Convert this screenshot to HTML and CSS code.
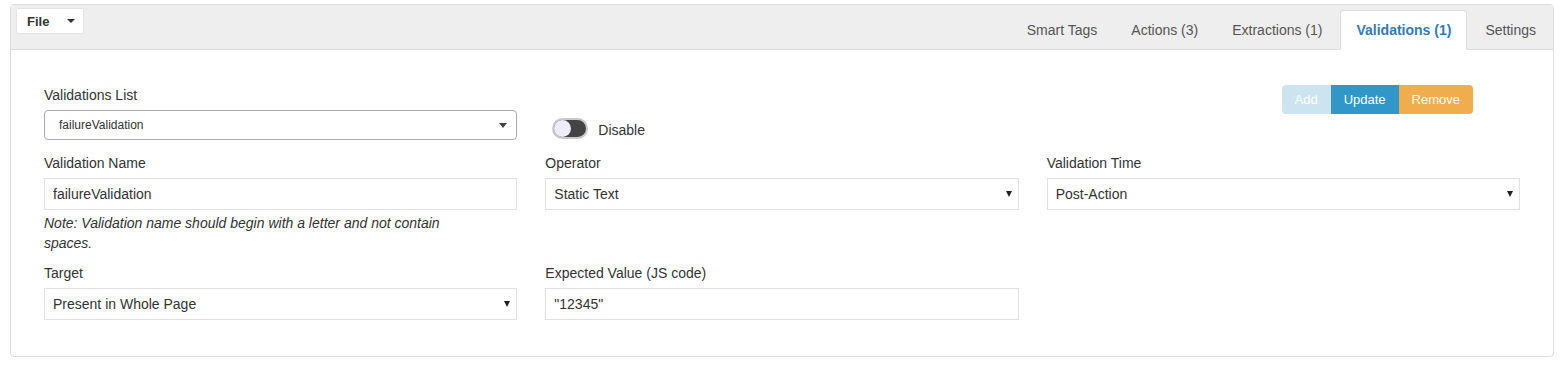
FILE: index.html
```html
<!DOCTYPE html>
<html lang="en">
<head>
    <meta charset="UTF-8">
    <meta name="viewport" content="width=device-width, initial-scale=1.0">
    <title>Validations</title>
    <link rel="stylesheet" href="styles.css">
</head>
<body>
    <div class="panel">
        <div class="panel-header">
            <button class="file-btn">File <span class="caret"></span></button>
            <ul class="tabs">
                <li><a href="#">Smart Tags</a></li>
                <li><a href="#">Actions (3)</a></li>
                <li><a href="#">Extractions (1)</a></li>
                <li class="active"><a href="#">Validations (1)</a></li>
                <li><a href="#">Settings</a></li>
            </ul>
        </div>
        <div class="panel-body">
            <div class="form-row first-row">
                <div class="form-group">
                    <label>Validations List</label>
                    <div class="select-wrap fancy">
                        <select class="form-control">
                            <option>failureValidation</option>
                        </select>
                    </div>
                </div>
                <div class="toggle-group">
                    <span class="switch"><span class="knob"></span></span>
                    <span class="toggle-label">Disable</span>
                </div>
                <div class="actions">
                    <div class="btn-group">
                        <button class="btn btn-add">Add</button>
                        <button class="btn btn-update">Update</button>
                        <button class="btn btn-remove">Remove</button>
                    </div>
                </div>
            </div>

            <div class="form-row second-row">
                <div class="form-group">
                    <label>Validation Name</label>
                    <input class="form-control" type="text" value="failureValidation">
                    <p class="note">Note: Validation name should begin with a letter and not contain spaces.</p>
                </div>
                <div class="form-group">
                    <label>Operator</label>
                    <div class="select-wrap">
                        <select class="form-control">
                            <option>Static Text</option>
                        </select>
                    </div>
                </div>
                <div class="form-group">
                    <label>Validation Time</label>
                    <div class="select-wrap">
                        <select class="form-control">
                            <option>Post-Action</option>
                        </select>
                    </div>
                </div>
            </div>

            <div class="form-row">
                <div class="form-group">
                    <label>Target</label>
                    <div class="select-wrap">
                        <select class="form-control">
                            <option>Present in Whole Page</option>
                        </select>
                    </div>
                </div>
                <div class="form-group">
                    <label>Expected Value (JS code)</label>
                    <input class="form-control" type="text" value="&quot;12345&quot;">
                </div>
            </div>
        </div>
    </div>
</body>
</html>
```

FILE: styles.css
```css
body {
    font-family: "Liberation Sans", Arial, sans-serif;
    font-size: 14px;
    color: #333;
    margin: 0;
    background-color: #fff;
}
.panel {
    margin: 4px 7px 0 10px;
    border: 1px solid #ddd;
    border-radius: 4px;
}
.panel-header {
    display: flex;
    align-items: flex-start;
    background-color: #eee;
    border-bottom: 1px solid #ddd;
}
.file-btn {
    margin: 3px 0 0 5px;
    height: 26px;
    width: 68px;
    padding: 0 10px;
    background-color: #fff;
    border: 1px solid #e4e4e4;
    border-radius: 2px;
    font-family: inherit;
    font-size: 13px;
    font-weight: bold;
    color: #333;
    text-align: left;
    display: flex;
    align-items: center;
}
.caret {
    margin-left: 18px;
    border-top: 4px solid #333;
    border-left: 4px solid transparent;
    border-right: 4px solid transparent;
}
.tabs {
    list-style: none;
    display: flex;
    margin: 5px -1px -1px auto;
    padding: 0;
}
.tabs li a {
    display: block;
    margin-right: 2px;
    padding: 9px 15px;
    line-height: 20px;
    color: #555;
    text-decoration: none;
    border: 1px solid transparent;
    border-radius: 4px 4px 0 0;
}
.tabs li.active a {
    background-color: #fff;
    border-color: #ddd #ddd transparent;
    color: #337ab7;
    font-weight: bold;
}
.panel-body {
    padding: 35px 33px 36px;
}
.form-row {
    display: grid;
    grid-template-columns: repeat(3, 1fr);
    column-gap: 28px;
}
.first-row {
    margin-bottom: 13px;
}
.second-row {
    margin-bottom: 10px;
}
label {
    display: block;
    line-height: 20px;
    margin-bottom: 5px;
}
.form-control {
    display: block;
    width: 100%;
    box-sizing: border-box;
    height: 32px;
    padding: 0 8px;
    border: 1px solid #e2e2e2;
    box-shadow: inset 0 0 1px rgba(0, 0, 0, 0.08);
    border-radius: 0;
    background-color: #fff;
    font-family: inherit;
    font-size: 14px;
    color: #333;
}
select.form-control {
    appearance: none;
    -webkit-appearance: none;
}
.select-wrap {
    position: relative;
}
.select-wrap::after {
    content: "";
    position: absolute;
    right: 7px;
    top: 13px;
    border-top: 6px solid #222;
    border-left: 3px solid transparent;
    border-right: 3px solid transparent;
    pointer-events: none;
}
.fancy .form-control {
    height: 30px;
    border: 1px solid #aaa;
    border-radius: 4px;
    box-shadow: none;
    padding-left: 14px;
    font-size: 12px;
}
.fancy::after {
    right: 10px;
    top: 13px;
    border-top: 5px solid #444;
    border-left: 4px solid transparent;
    border-right: 4px solid transparent;
}
.note {
    margin: 4px 0 0;
    max-width: 430px;
    font-size: 14px;
    font-style: italic;
    line-height: 19.5px;
}
.toggle-group {
    align-self: end;
    display: flex;
    align-items: center;
    margin: 0 0 1px 7px;
}
.switch {
    position: relative;
    box-sizing: border-box;
    width: 36px;
    height: 21px;
    border-radius: 11px;
    background-color: #444;
    border: 2px solid #c9c9c9;
}
.knob {
    position: absolute;
    left: 0;
    top: 0;
    width: 17px;
    height: 17px;
    border-radius: 50%;
    background-color: #ededf9;
}
.toggle-label {
    margin-left: 10px;
    padding-top: 3px;
}
.actions {
    display: flex;
    justify-content: flex-end;
    align-items: flex-start;
    margin-right: 47px;
}
.btn-group {
    display: flex;
}
.btn {
    height: 29px;
    padding: 0 13px;
    border: none;
    font-family: inherit;
    font-size: 13px;
    color: #fff;
    cursor: pointer;
}
.btn-add {
    background-color: #cbe4f0;
    border-radius: 4px 0 0 4px;
}
.btn-update {
    background-color: #3097c8;
}
.btn-remove {
    background-color: #f0ad4e;
    border-radius: 0 4px 4px 0;
}
```
